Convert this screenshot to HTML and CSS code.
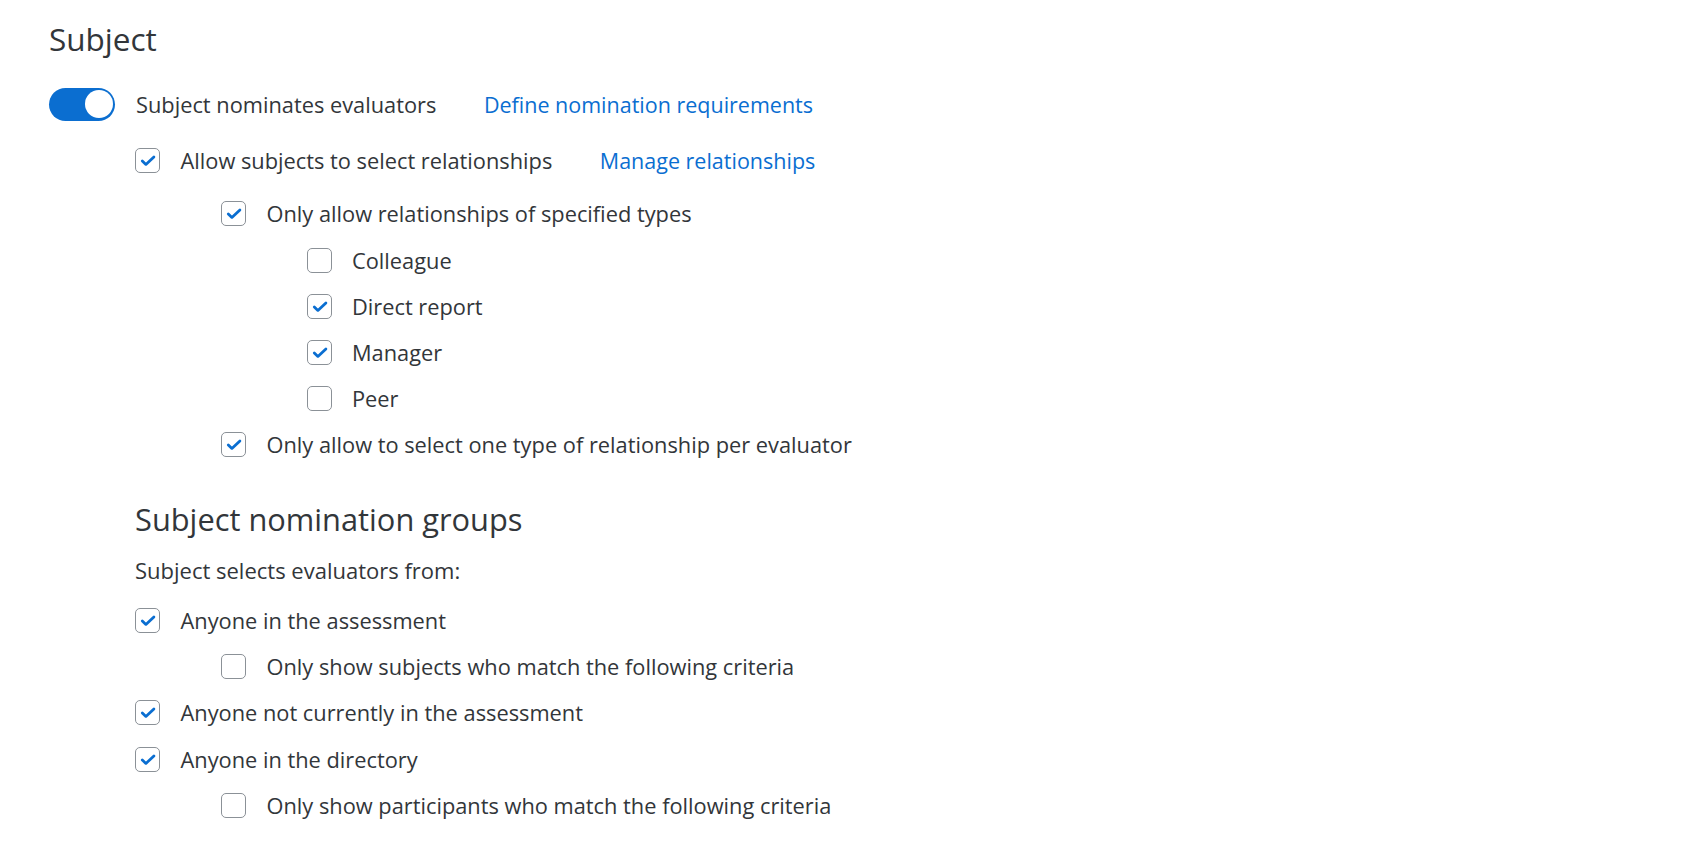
FILE: index.html
```html
<!DOCTYPE html>
<html lang="en">
<head>
    <meta charset="UTF-8">
    <title>Subject settings</title>
    <link rel="stylesheet" href="styles.css">
</head>
<body>
    <div class="page">
        <h1>Subject</h1>

        <div class="row toggle-row">
            <span class="toggle on"><span class="knob"></span></span>
            <span class="label">Subject nominates evaluators</span>
            <a class="link" href="#">Define nomination requirements</a>
        </div>

        <div class="row level1 first-check">
            <span class="box checked"><svg viewBox="0 0 22 22"><path d="M6.3 12l3.6 3.4 8-7.5"/></svg></span>
            <span class="label">Allow subjects to select relationships</span>
            <a class="link" href="#">Manage relationships</a>
        </div>

        <div class="nested">
            <div class="row level2">
                <span class="box checked"><svg viewBox="0 0 22 22"><path d="M6.3 12l3.6 3.4 8-7.5"/></svg></span>
                <span class="label">Only allow relationships of specified types</span>
            </div>
            <div class="row level3">
                <span class="box"></span>
                <span class="label">Colleague</span>
            </div>
            <div class="row level3">
                <span class="box checked"><svg viewBox="0 0 22 22"><path d="M6.3 12l3.6 3.4 8-7.5"/></svg></span>
                <span class="label">Direct report</span>
            </div>
            <div class="row level3">
                <span class="box checked"><svg viewBox="0 0 22 22"><path d="M6.3 12l3.6 3.4 8-7.5"/></svg></span>
                <span class="label">Manager</span>
            </div>
            <div class="row level3">
                <span class="box"></span>
                <span class="label">Peer</span>
            </div>
            <div class="row level2">
                <span class="box checked"><svg viewBox="0 0 22 22"><path d="M6.3 12l3.6 3.4 8-7.5"/></svg></span>
                <span class="label">Only allow to select one type of relationship per evaluator</span>
            </div>
        </div>

        <div class="groups">
            <h2>Subject nomination groups</h2>
            <p class="hint">Subject selects evaluators from:</p>

            <div class="group-list">
                <div class="row">
                    <span class="box checked"><svg viewBox="0 0 22 22"><path d="M6.3 12l3.6 3.4 8-7.5"/></svg></span>
                    <span class="label">Anyone in the assessment</span>
                </div>
                <div class="row sub">
                    <span class="box"></span>
                    <span class="label">Only show subjects who match the following criteria</span>
                </div>
                <div class="row">
                    <span class="box checked"><svg viewBox="0 0 22 22"><path d="M6.3 12l3.6 3.4 8-7.5"/></svg></span>
                    <span class="label">Anyone not currently in the assessment</span>
                </div>
                <div class="row">
                    <span class="box checked"><svg viewBox="0 0 22 22"><path d="M6.3 12l3.6 3.4 8-7.5"/></svg></span>
                    <span class="label">Anyone in the directory</span>
                </div>
                <div class="row sub">
                    <span class="box"></span>
                    <span class="label">Only show participants who match the following criteria</span>
                </div>
            </div>
        </div>
    </div>
</body>
</html>
```
FILE: styles.css
```css
body {
    margin: 0;
    background: #ffffff;
    font-family: "Open Sans", "Noto Sans", sans-serif;
    color: #32363a;
}
.page {
    padding: 19px 0 0 49px;
}
h1 {
    margin: 0;
    font-size: 31.5px;
    font-weight: 400;
    line-height: 40px;
}
.row {
    display: flex;
    align-items: center;
    height: 46.2px;
    font-size: 21.8px;
}
.label {
    white-space: nowrap;
}
.link {
    color: #0a6ed1;
    text-decoration: none;
    font-size: 21.5px;
    margin-left: 47.5px;
}
.link:hover {
    text-decoration: underline;
}

/* toggle switch */
.toggle-row {
    margin-top: 22px;
}
.toggle {
    position: relative;
    width: 66px;
    height: 33px;
    border-radius: 17px;
    background: #0b6ed0;
    margin-right: 21px;
    flex-shrink: 0;
}
.toggle .knob {
    position: absolute;
    top: 2.5px;
    right: 2.5px;
    width: 28px;
    height: 28px;
    border-radius: 50%;
    background: #ffffff;
}

/* checkboxes */
.box {
    width: 25px;
    height: 25px;
    box-sizing: border-box;
    border: 1.5px solid #8b9197;
    border-radius: 5px;
    background: #ffffff;
    margin-right: 20.5px;
    flex-shrink: 0;
    display: flex;
}
.box svg {
    width: 22px;
    height: 22px;
}
.box svg path {
    fill: none;
    stroke: #0a6ed1;
    stroke-width: 2.8;
    stroke-linecap: round;
    stroke-linejoin: round;
}
.level1 {
    padding-left: 86px;
}
.first-check {
    margin-top: 10.5px;
}
.nested {
    margin-top: 7px;
}
.level2 {
    padding-left: 172px;
}
.level3 {
    padding-left: 257.5px;
}

/* nomination groups */
.groups {
    padding-left: 86px;
    margin-top: 31px;
}
h2 {
    margin: 0;
    font-size: 30.8px;
    font-weight: 400;
    line-height: 40px;
}
.hint {
    margin: 16px 0 0;
    font-size: 22px;
    line-height: 30px;
}
.group-list {
    margin-top: 12.5px;
}
.group-list .sub {
    padding-left: 86px;
}
```
